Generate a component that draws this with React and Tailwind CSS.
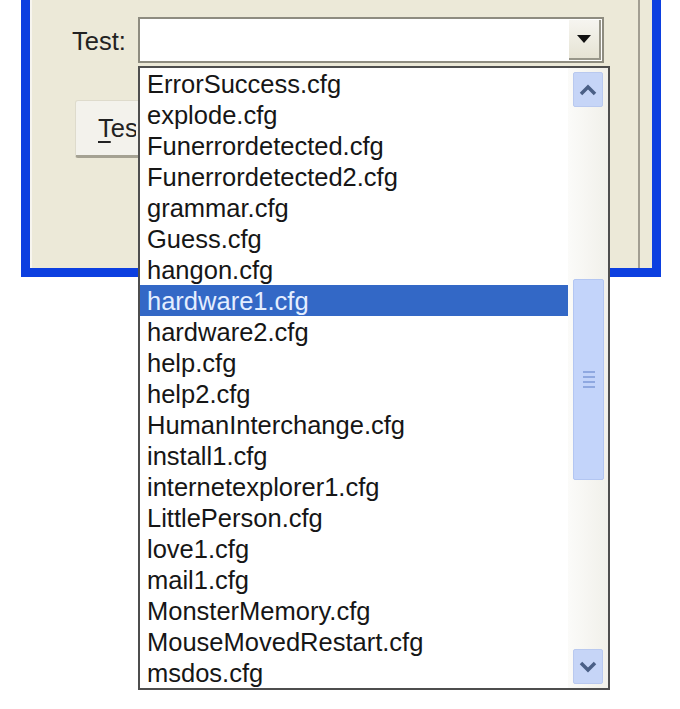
const files = [
    "ErrorSuccess.cfg",
    "explode.cfg",
    "Funerrordetected.cfg",
    "Funerrordetected2.cfg",
    "grammar.cfg",
    "Guess.cfg",
    "hangon.cfg",
    "hardware1.cfg",
    "hardware2.cfg",
    "help.cfg",
    "help2.cfg",
    "HumanInterchange.cfg",
    "install1.cfg",
    "internetexplorer1.cfg",
    "LittlePerson.cfg",
    "love1.cfg",
    "mail1.cfg",
    "MonsterMemory.cfg",
    "MouseMovedRestart.cfg",
    "msdos.cfg",
];

const selected = "hardware1.cfg";

const Chevron = ({ up }) => (
    <svg width="18" height="12" viewBox="0 0 18 12">
        <path
            d={up ? "M2 10 L9 3 L16 10" : "M2 2 L9 9 L16 2"}
            fill="none"
            stroke="#4a5f86"
            strokeWidth="3.5"
            strokeLinejoin="miter"
        />
    </svg>
);

const ScrollButton = ({ up }) => (
    <div className="h-[35px] w-[30px] rounded-[2px] border border-[#b9c9ef] bg-[#c6d5f7] flex items-center justify-center">
        <Chevron up={up} />
    </div>
);

export default function App() {
    return (
        <div
            className="relative w-[680px] h-[709px] bg-white overflow-hidden text-[#1a1a1a]"
            style={{ fontFamily: '"Liberation Sans", Arial, sans-serif' }}
        >
            {/* Dialog window */}
            <div className="ml-[21px] w-[640px] h-[277px] border-x-[9px] border-b-[9px] border-[#0c3fe0] bg-[#ece9d8]">
                <div className="h-full flex border-l-2 border-[#f7f5ee]">
                    <div className="flex-1 relative">
                        {/* Combo row */}
                        <div className="flex items-start pt-[17px]">
                            <span className="ml-[40px] mt-[9px] text-[25.5px] leading-[31px] text-[#222]">Test:</span>
                            <div className="ml-[12px] w-[466px] h-[46px] border-2 border-[#8e8c80] bg-white flex justify-end items-center pr-[1px]">
                                <div className="w-[32px] h-[40px] bg-gradient-to-b from-[#f6f5f0] to-[#e6e3d4] border-r-2 border-b-2 border-[#98968a] flex items-center justify-center">
                                    <svg width="14" height="9" viewBox="0 0 14 9">
                                        <path d="M0 0 H14 L7 8 Z" fill="#111" />
                                    </svg>
                                </div>
                            </div>
                        </div>
                        {/* Test button, mostly hidden behind the list */}
                        <div className="ml-[43px] mt-[37px] w-[130px] h-[58px] rounded-[3px] border border-[#dedbcc] border-b-[3px] border-b-[#a5a293] bg-[#f3f2ec] flex items-center pl-[22px]">
                            <span className="block w-[38px] overflow-hidden whitespace-nowrap text-[25.5px] leading-[31px] text-[#222]">
                                <span className="underline underline-offset-4">T</span>est...
                            </span>
                        </div>
                    </div>
                    <div className="w-[2px] bg-[#a29e92] mr-[12px]"></div>
                </div>
            </div>

            {/* Dropdown list */}
            <div className="absolute left-[138px] top-[66px] w-[472px] h-[624px] border-2 border-[#4e4e4e] bg-white flex">
                <div className="flex-1 flex flex-col">
                    {files.map((f) => (
                        <div
                            key={f}
                            className={`h-[31px] pl-[7px] text-[25.5px] leading-[33px] whitespace-nowrap ${
                                f === selected ? "bg-[#3368c6] text-[#e4eeff]" : "text-[#161616]"
                            }`}
                        >
                            {f}
                        </div>
                    ))}
                </div>
                {/* Scrollbar */}
                <div className="w-[40px] bg-gradient-to-r from-[#fbfbf9] to-[#f1f0ea] flex flex-col pl-[5px] pt-[4px]">
                    <ScrollButton up />
                    <div className="mt-[172px] h-[201px] w-[31px] rounded-[2px] border border-[#b3c6f2] bg-[#c3d4fa] flex flex-col items-center justify-center gap-[3px]">
                        <div className="w-[12px] h-[2px] bg-[#8fa8e0]"></div>
                        <div className="w-[12px] h-[2px] bg-[#8fa8e0]"></div>
                        <div className="w-[12px] h-[2px] bg-[#8fa8e0]"></div>
                        <div className="w-[12px] h-[2px] bg-[#8fa8e0]"></div>
                    </div>
                    <div className="mt-[169px]">
                        <ScrollButton />
                    </div>
                </div>
            </div>
        </div>
    );
}
